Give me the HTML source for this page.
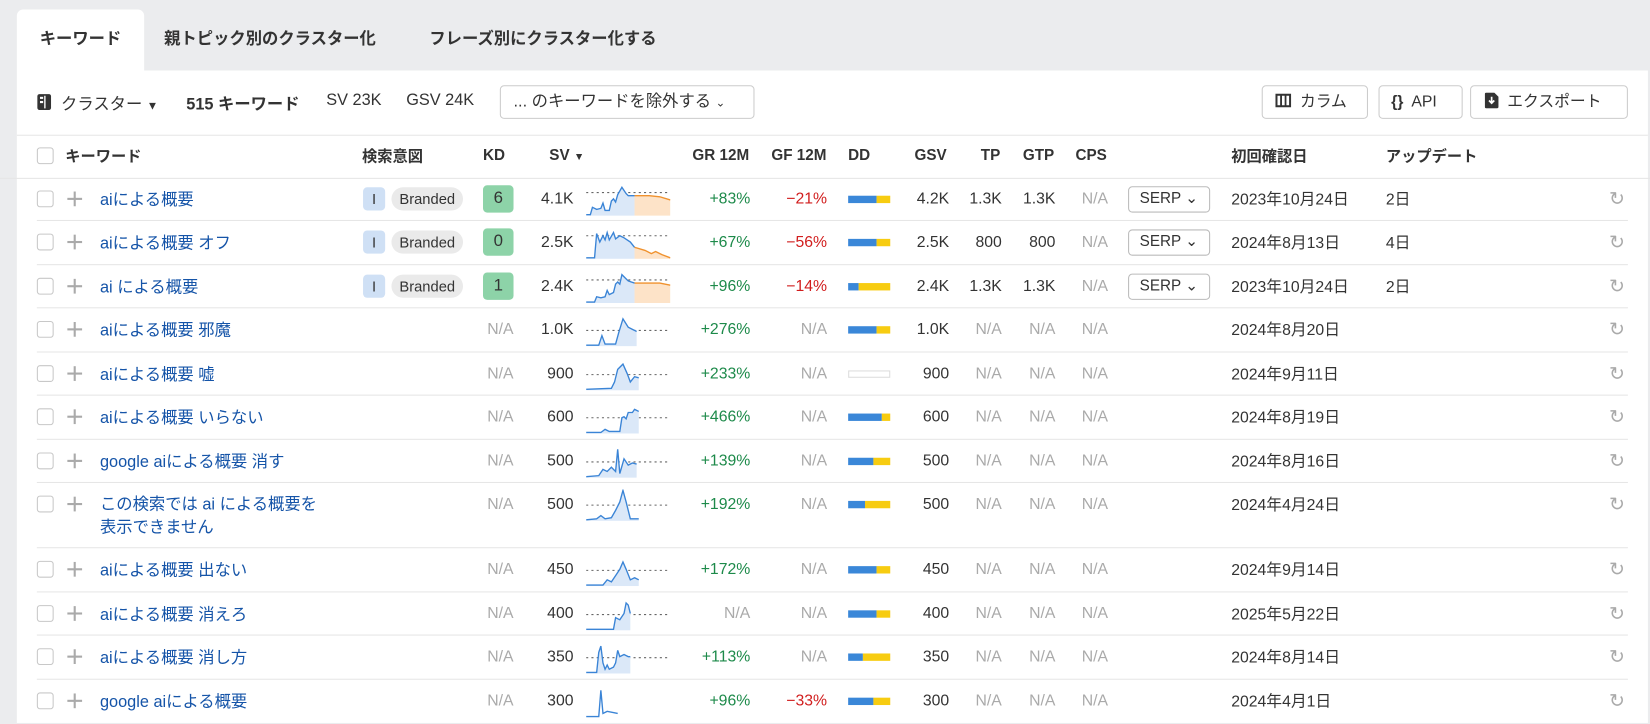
<!DOCTYPE html>
<html><head><meta charset="utf-8"><style>
*{box-sizing:border-box;margin:0;padding:0}
body{width:1650px;height:701px;overflow:hidden;background:#ebecee;font-family:"Liberation Sans","Noto Sans CJK JP",sans-serif;font-size:15px;color:#333;position:relative}
#w{position:absolute;left:0;top:0;width:1568px;height:666px;transform:scale(1.05230);transform-origin:0 0}
.abs{position:absolute;white-space:nowrap}
.panel{position:absolute;left:16px;top:67px;width:1550px;height:620px;background:#fff}
.tab{position:absolute;top:9px;height:58px;line-height:58px;font-weight:bold;font-size:15.5px;color:#333}
.btn{position:absolute;border:1px solid #ccc;border-radius:4px;height:32px;top:81px;line-height:30px;font-size:15px;background:#fff}
.hd{position:absolute;top:148px;font-weight:bold;font-size:14.5px;color:#333;transform:translateY(-50%)}
.row{position:absolute;left:0;width:1568px}
.row .l{position:absolute;left:35px;right:21px;bottom:0;border-bottom:1px solid #e6e6e6}
.c{position:absolute;top:20px;transform:translateY(-50%);white-space:nowrap}
.cb{position:absolute;left:35px;top:12px;width:16px;height:16px;border:1px solid #c8c8c8;border-radius:3px;background:#fff}
.pl{position:absolute;left:64px;top:13px;width:14px;height:14px}
.pl:before{content:"";position:absolute;left:6px;top:0;width:2px;height:14px;background:#aaa}
.pl:after{content:"";position:absolute;top:6px;left:0;height:2px;width:14px;background:#aaa}
.kw{left:95px;color:#1554a8;font-size:15.5px}
.r{text-align:right}
.na{color:#aaa}
.g{color:#1d8a4a}.rd{color:#d11d1d}
.ib{position:absolute;left:345px;top:9px;width:21px;height:22px;background:#cfe0f5;border-radius:4px;text-align:center;line-height:22px;font-size:14px}
.br{position:absolute;left:372px;top:9px;width:68px;height:22px;background:#eaeaea;border-radius:11px;text-align:center;line-height:22px;font-size:14px}
.kd{position:absolute;left:459px;top:7px;width:29px;height:26px;background:#8dd3a8;border-radius:4px;text-align:center;line-height:26px;font-size:16px}
.sp{position:absolute;left:557px;top:6px}
.dd{position:absolute;left:806px;top:17px;width:40px;height:7px;display:flex}
.dd i{display:block;height:7px}
.serp{position:absolute;left:1072px;top:8px;width:78px;height:25px;border:1px solid #bbb;border-radius:4px;line-height:23px;padding-left:10px;font-size:14.5px}
.rf{position:absolute;left:1529px;top:12px;color:#aaa;font-size:18px;line-height:16px}
</style></head><body><div id="w">
<div class="abs tab" style="left:16px;width:121px;background:#fff;border-radius:6px 6px 0 0;text-align:center">キーワード</div>
<div class="abs tab" style="left:156px">親トピック別のクラスター化</div>
<div class="abs tab" style="left:408px">フレーズ別にクラスター化する</div>
<div class="panel"></div>
<div style="position:absolute;left:16px;top:128px;width:1550px;border-top:1px solid #e6e6e6"></div>
<div style="position:absolute;left:0;top:169px;width:1568px;border-top:1px solid #e6e6e6"></div>

<svg class="abs" style="left:35px;top:89px" width="14" height="16" viewBox="0 0 14 16"><rect x="0.5" y="0.5" width="13" height="15" rx="2" fill="#333"/><rect x="3" y="3" width="3" height="2" fill="#fff"/><rect x="3" y="7" width="3" height="2" fill="#fff"/><rect x="7" y="2" width="1.3" height="12" fill="#fff"/></svg>
<div class="abs" style="left:58px;top:87px;font-size:15.5px">クラスター <span style="font-size:11px">▼</span></div>
<div class="abs" style="left:177px;top:87px;font-weight:bold;font-size:15.5px">515 キーワード</div>
<div class="abs" style="left:310px;top:87px;font-size:15.5px">SV 23K</div>
<div class="abs" style="left:386px;top:87px;font-size:15.5px">GSV 24K</div>
<div class="btn" style="left:475px;width:242px;padding-left:12px;font-size:15.5px">... のキーワードを除外する <span style="font-size:11px">⌄</span></div>
<div class="btn" style="left:1199px;width:101px;padding-left:12px"><svg width="15" height="13" style="vertical-align:-1px"><rect x="0" y="0" width="15" height="13" fill="#333"/><rect x="2" y="2" width="2.5" height="9" fill="#fff"/><rect x="6.3" y="2" width="2.5" height="9" fill="#fff"/><rect x="10.5" y="2" width="2.5" height="9" fill="#fff"/></svg>&nbsp; カラム</div>
<div class="btn" style="left:1310px;width:80px;padding-left:11px"><b>{}</b>&nbsp; API</div>
<div class="btn" style="left:1397px;width:150px;padding-left:13px"><svg width="13" height="15" style="vertical-align:-2px"><path d="M0 1.5Q0 0 1.5 0H9L13 4V13.5Q13 15 11.5 15H1.5Q0 15 0 13.5Z" fill="#333"/><path d="M6.5 4V10M4 7.5L6.5 10L9 7.5" stroke="#fff" stroke-width="1.6" fill="none"/></svg>&nbsp; エクスポート</div>

<div class="cb" style="top:140px"></div>
<div class="hd" style="left:62px">キーワード</div>
<div class="hd" style="left:344px">検索意図</div>
<div class="hd" style="left:459px">KD</div>
<div class="hd" style="left:522px">SV <span style="font-size:10px">▼</span></div>
<div class="hd" style="left:658px">GR 12M</div>
<div class="hd" style="left:733px">GF 12M</div>
<div class="hd" style="left:806px">DD</div>
<div class="hd" style="left:869px">GSV</div>
<div class="hd" style="left:932px">TP</div>
<div class="hd" style="left:972px">GTP</div>
<div class="hd" style="left:1022px">CPS</div>
<div class="hd" style="left:1170px">初回確認日</div>
<div class="hd" style="left:1317px">アップデート</div>

<div class="row" style="top:169px;height:41px"><div class="l"></div><div class="cb"></div><div class="pl"></div><div class="c kw">aiによる概要</div><div class="ib">I</div><div class="br">Branded</div><div class="kd">6</div><div class="c r" style="right:1023px">4.1K</div>
<svg class="sp" width="80" height="30"><line x1="0" y1="8" x2="80" y2="8" stroke="#666" stroke-dasharray="2,3"/><path d="M0 29L4 29L6 22L10 24L14 23L16 18L18 25L22 25L24 16L26 14L28 17L30 10L34 3L38 9L40 11L46 11V30H0Z" fill="#dbe8f8"/><path d="M0 29L4 29L6 22L10 24L14 23L16 18L18 25L22 25L24 16L26 14L28 17L30 10L34 3L38 9L40 11L46 11" stroke="#3a84d6" fill="none" stroke-width="1.3"/><path d="M46 11L60 11L70 12L80 15V30H46Z" fill="#fde3c8"/><path d="M46 11L60 11L70 12L80 15" stroke="#f0922e" fill="none" stroke-width="1.3"/></svg>
<div class="c r g" style="right:855px">+83%</div><div class="c r rd" style="right:782px">−21%</div><div class="dd"><i style="width:27px;background:#3a87d8"></i><i style="flex:1;background:#f7cc11"></i></div><div class="c r" style="right:666px">4.2K</div><div class="c r" style="right:616px">1.3K</div><div class="c r" style="right:565px">1.3K</div><div class="c r na" style="right:515px">N/A</div><div class="serp">SERP ⌄</div><div class="c" style="left:1170px">2023年10月24日</div><div class="c" style="left:1317px">2日</div><div class="rf">↻</div></div>

<div class="row" style="top:210px;height:42px"><div class="l"></div><div class="cb"></div><div class="pl"></div><div class="c kw">aiによる概要 オフ</div><div class="ib">I</div><div class="br">Branded</div><div class="kd">0</div><div class="c r" style="right:1023px">2.5K</div>
<svg class="sp" width="80" height="30"><line x1="0" y1="8" x2="80" y2="8" stroke="#666" stroke-dasharray="2,3"/><path d="M0 29L8 29L10 6L13 14L16 8L18 12L20 5L22 12L26 5L28 11L32 8L36 10L42 14L46 19V30H0Z" fill="#dbe8f8"/><path d="M0 29L8 29L10 6L13 14L16 8L18 12L20 5L22 12L26 5L28 11L32 8L36 10L42 14L46 19" stroke="#3a84d6" fill="none" stroke-width="1.3"/><path d="M46 19L56 22L62 25L66 23L72 26L80 29V30H46Z" fill="#fde3c8"/><path d="M46 19L56 22L62 25L66 23L72 26L80 29" stroke="#f0922e" fill="none" stroke-width="1.3"/></svg>
<div class="c r g" style="right:855px">+67%</div><div class="c r rd" style="right:782px">−56%</div><div class="dd"><i style="width:27px;background:#3a87d8"></i><i style="flex:1;background:#f7cc11"></i></div><div class="c r" style="right:666px">2.5K</div><div class="c r" style="right:616px">800</div><div class="c r" style="right:565px">800</div><div class="c r na" style="right:515px">N/A</div><div class="serp">SERP ⌄</div><div class="c" style="left:1170px">2024年8月13日</div><div class="c" style="left:1317px">4日</div><div class="rf">↻</div></div>

<div class="row" style="top:252px;height:41px"><div class="l"></div><div class="cb"></div><div class="pl"></div><div class="c kw">ai による概要</div><div class="ib">I</div><div class="br">Branded</div><div class="kd">1</div><div class="c r" style="right:1023px">2.4K</div>
<svg class="sp" width="80" height="30"><line x1="0" y1="8" x2="80" y2="8" stroke="#666" stroke-dasharray="2,3"/><path d="M0 29L8 29L10 24L14 25L18 24L20 18L22 22L26 20L28 12L30 10L32 12L34 3L38 7L40 9L46 11V30H0Z" fill="#dbe8f8"/><path d="M0 29L8 29L10 24L14 25L18 24L20 18L22 22L26 20L28 12L30 10L32 12L34 3L38 7L40 9L46 11" stroke="#3a84d6" fill="none" stroke-width="1.3"/><path d="M46 11L60 11L70 11L80 13V30H46Z" fill="#fde3c8"/><path d="M46 11L60 11L70 11L80 13" stroke="#f0922e" fill="none" stroke-width="1.3"/></svg>
<div class="c r g" style="right:855px">+96%</div><div class="c r rd" style="right:782px">−14%</div><div class="dd"><i style="width:10px;background:#3a87d8"></i><i style="flex:1;background:#f7cc11"></i></div><div class="c r" style="right:666px">2.4K</div><div class="c r" style="right:616px">1.3K</div><div class="c r" style="right:565px">1.3K</div><div class="c r na" style="right:515px">N/A</div><div class="serp">SERP ⌄</div><div class="c" style="left:1170px">2023年10月24日</div><div class="c" style="left:1317px">2日</div><div class="rf">↻</div></div>

<div class="row" style="top:293px;height:42px"><div class="l"></div><div class="cb"></div><div class="pl"></div><div class="c kw">aiによる概要 邪魔</div><div class="c r na" style="right:1080px">N/A</div><div class="c r" style="right:1023px">1.0K</div>
<svg class="sp" width="80" height="30"><line x1="0" y1="15" x2="80" y2="15" stroke="#666" stroke-dasharray="2,3"/><path d="M0 29L12 29L15 20L18 28L28 28L31 17L35 4L40 12L44 14L48 16V30H0Z" fill="#dbe8f8"/><path d="M0 29L12 29L15 20L18 28L28 28L31 17L35 4L40 12L44 14L48 16" stroke="#3a84d6" fill="none" stroke-width="1.3"/></svg>
<div class="c r g" style="right:855px">+276%</div><div class="c r na" style="right:782px">N/A</div><div class="dd"><i style="width:27px;background:#3a87d8"></i><i style="flex:1;background:#f7cc11"></i></div><div class="c r" style="right:666px">1.0K</div><div class="c r na" style="right:616px">N/A</div><div class="c r na" style="right:565px">N/A</div><div class="c r na" style="right:515px">N/A</div><div class="c" style="left:1170px">2024年8月20日</div><div class="rf">↻</div></div>

<div class="row" style="top:335px;height:41px"><div class="l"></div><div class="cb"></div><div class="pl"></div><div class="c kw">aiによる概要 嘘</div><div class="c r na" style="right:1080px">N/A</div><div class="c r" style="right:1023px">900</div>
<svg class="sp" width="80" height="30"><line x1="0" y1="15" x2="80" y2="15" stroke="#666" stroke-dasharray="2,3"/><path d="M0 29L24 28L27 22L30 10L35 5L39 14L42 22L46 17L50 18V30H0Z" fill="#dbe8f8"/><path d="M0 29L24 28L27 22L30 10L35 5L39 14L42 22L46 17L50 18" stroke="#3a84d6" fill="none" stroke-width="1.3"/></svg>
<div class="c r g" style="right:855px">+233%</div><div class="c r na" style="right:782px">N/A</div><div class="dd" style="border:1px solid #ddd"></div><div class="c r" style="right:666px">900</div><div class="c r na" style="right:616px">N/A</div><div class="c r na" style="right:565px">N/A</div><div class="c r na" style="right:515px">N/A</div><div class="c" style="left:1170px">2024年9月11日</div><div class="rf">↻</div></div>

<div class="row" style="top:376px;height:42px"><div class="l"></div><div class="cb"></div><div class="pl"></div><div class="c kw">aiによる概要 いらない</div><div class="c r na" style="right:1080px">N/A</div><div class="c r" style="right:1023px">600</div>
<svg class="sp" width="80" height="30"><line x1="0" y1="15" x2="80" y2="15" stroke="#666" stroke-dasharray="2,3"/><path d="M0 29L14 29L18 26L22 28L32 28L34 15L36 14L38 16L40 10L44 10L46 7L50 9V30H0Z" fill="#dbe8f8"/><path d="M0 29L14 29L18 26L22 28L32 28L34 15L36 14L38 16L40 10L44 10L46 7L50 9" stroke="#3a84d6" fill="none" stroke-width="1.3"/></svg>
<div class="c r g" style="right:855px">+466%</div><div class="c r na" style="right:782px">N/A</div><div class="dd"><i style="width:32px;background:#3a87d8"></i><i style="flex:1;background:#f7cc11"></i></div><div class="c r" style="right:666px">600</div><div class="c r na" style="right:616px">N/A</div><div class="c r na" style="right:565px">N/A</div><div class="c r na" style="right:515px">N/A</div><div class="c" style="left:1170px">2024年8月19日</div><div class="rf">↻</div></div>

<div class="row" style="top:418px;height:41px"><div class="l"></div><div class="cb"></div><div class="pl"></div><div class="c kw">google aiによる概要 消す</div><div class="c r na" style="right:1080px">N/A</div><div class="c r" style="right:1023px">500</div>
<svg class="sp" width="80" height="30"><line x1="0" y1="15" x2="80" y2="15" stroke="#666" stroke-dasharray="2,3"/><path d="M0 29L12 28L16 22L20 24L24 20L28 24L30 3L32 26L36 12L40 18L44 16L48 17V30H0Z" fill="#dbe8f8"/><path d="M0 29L12 28L16 22L20 24L24 20L28 24L30 3L32 26L36 12L40 18L44 16L48 17" stroke="#3a84d6" fill="none" stroke-width="1.3"/></svg>
<div class="c r g" style="right:855px">+139%</div><div class="c r na" style="right:782px">N/A</div><div class="dd"><i style="width:24px;background:#3a87d8"></i><i style="flex:1;background:#f7cc11"></i></div><div class="c r" style="right:666px">500</div><div class="c r na" style="right:616px">N/A</div><div class="c r na" style="right:565px">N/A</div><div class="c r na" style="right:515px">N/A</div><div class="c" style="left:1170px">2024年8月16日</div><div class="rf">↻</div></div>

<div class="row" style="top:459px;height:62px"><div class="l"></div><div class="cb"></div><div class="pl"></div><div class="abs kw" style="top:10px;line-height:22px">この検索では ai による概要を<br>表示できません</div><div class="c r na" style="right:1080px">N/A</div><div class="c r" style="right:1023px">500</div>
<svg class="sp" width="80" height="30"><line x1="0" y1="15" x2="80" y2="15" stroke="#666" stroke-dasharray="2,3"/><path d="M0 29L10 28L14 25L18 28L24 27L28 20L32 12L35 1L38 12L42 28L50 28V30H0Z" fill="#dbe8f8"/><path d="M0 29L10 28L14 25L18 28L24 27L28 20L32 12L35 1L38 12L42 28L50 28" stroke="#3a84d6" fill="none" stroke-width="1.3"/></svg>
<div class="c r g" style="right:855px">+192%</div><div class="c r na" style="right:782px">N/A</div><div class="dd"><i style="width:16px;background:#3a87d8"></i><i style="flex:1;background:#f7cc11"></i></div><div class="c r" style="right:666px">500</div><div class="c r na" style="right:616px">N/A</div><div class="c r na" style="right:565px">N/A</div><div class="c r na" style="right:515px">N/A</div><div class="c" style="left:1170px">2024年4月24日</div><div class="rf">↻</div></div>

<div class="row" style="top:521px;height:42px"><div class="l"></div><div class="cb"></div><div class="pl"></div><div class="c kw">aiによる概要 出ない</div><div class="c r na" style="right:1080px">N/A</div><div class="c r" style="right:1023px">450</div>
<svg class="sp" width="80" height="30"><line x1="0" y1="15" x2="80" y2="15" stroke="#666" stroke-dasharray="2,3"/><path d="M0 29L16 29L20 24L24 26L28 20L32 14L35 7L38 14L42 24L46 22L50 24V30H0Z" fill="#dbe8f8"/><path d="M0 29L16 29L20 24L24 26L28 20L32 14L35 7L38 14L42 24L46 22L50 24" stroke="#3a84d6" fill="none" stroke-width="1.3"/></svg>
<div class="c r g" style="right:855px">+172%</div><div class="c r na" style="right:782px">N/A</div><div class="dd"><i style="width:27px;background:#3a87d8"></i><i style="flex:1;background:#f7cc11"></i></div><div class="c r" style="right:666px">450</div><div class="c r na" style="right:616px">N/A</div><div class="c r na" style="right:565px">N/A</div><div class="c r na" style="right:515px">N/A</div><div class="c" style="left:1170px">2024年9月14日</div><div class="rf">↻</div></div>

<div class="row" style="top:563px;height:41px"><div class="l"></div><div class="cb"></div><div class="pl"></div><div class="c kw">aiによる概要 消えろ</div><div class="c r na" style="right:1080px">N/A</div><div class="c r" style="right:1023px">400</div>
<svg class="sp" width="80" height="30"><line x1="0" y1="15" x2="80" y2="15" stroke="#666" stroke-dasharray="2,3"/><path d="M0 29L26 29L28 18L32 20L36 14L38 4L40 6L42 14V30H0Z" fill="#dbe8f8"/><path d="M0 29L26 29L28 18L32 20L36 14L38 4L40 6L42 14" stroke="#3a84d6" fill="none" stroke-width="1.3"/></svg>
<div class="c r na" style="right:855px">N/A</div><div class="c r na" style="right:782px">N/A</div><div class="dd"><i style="width:27px;background:#3a87d8"></i><i style="flex:1;background:#f7cc11"></i></div><div class="c r" style="right:666px">400</div><div class="c r na" style="right:616px">N/A</div><div class="c r na" style="right:565px">N/A</div><div class="c r na" style="right:515px">N/A</div><div class="c" style="left:1170px">2025年5月22日</div><div class="rf">↻</div></div>

<div class="row" style="top:604px;height:42px"><div class="l"></div><div class="cb"></div><div class="pl"></div><div class="c kw">aiによる概要 消し方</div><div class="c r na" style="right:1080px">N/A</div><div class="c r" style="right:1023px">350</div>
<svg class="sp" width="80" height="30"><line x1="0" y1="15" x2="80" y2="15" stroke="#666" stroke-dasharray="2,3"/><path d="M0 29L10 29L12 10L14 4L16 20L18 26L20 22L22 26L26 24L28 20L30 8L32 14L36 12L40 14L42 14V30H0Z" fill="#dbe8f8"/><path d="M0 29L10 29L12 10L14 4L16 20L18 26L20 22L22 26L26 24L28 20L30 8L32 14L36 12L40 14L42 14" stroke="#3a84d6" fill="none" stroke-width="1.3"/></svg>
<div class="c r g" style="right:855px">+113%</div><div class="c r na" style="right:782px">N/A</div><div class="dd"><i style="width:14px;background:#3a87d8"></i><i style="flex:1;background:#f7cc11"></i></div><div class="c r" style="right:666px">350</div><div class="c r na" style="right:616px">N/A</div><div class="c r na" style="right:565px">N/A</div><div class="c r na" style="right:515px">N/A</div><div class="c" style="left:1170px">2024年8月14日</div><div class="rf">↻</div></div>

<div class="row" style="top:646px;height:42px"><div class="cb"></div><div class="pl"></div><div class="c kw">google aiによる概要</div><div class="c r na" style="right:1080px">N/A</div><div class="c r" style="right:1023px">300</div>
<svg class="sp" width="80" height="30"><path d="M0 29L12 29L14 4L16 26L20 24L30 26" stroke="#3a84d6" fill="none" stroke-width="1.3"/></svg>
<div class="c r g" style="right:855px">+96%</div><div class="c r rd" style="right:782px">−33%</div><div class="dd"><i style="width:24px;background:#3a87d8"></i><i style="flex:1;background:#f7cc11"></i></div><div class="c r" style="right:666px">300</div><div class="c r na" style="right:616px">N/A</div><div class="c r na" style="right:565px">N/A</div><div class="c r na" style="right:515px">N/A</div><div class="c" style="left:1170px">2024年4月1日</div><div class="rf">↻</div></div>
</div></body></html>
